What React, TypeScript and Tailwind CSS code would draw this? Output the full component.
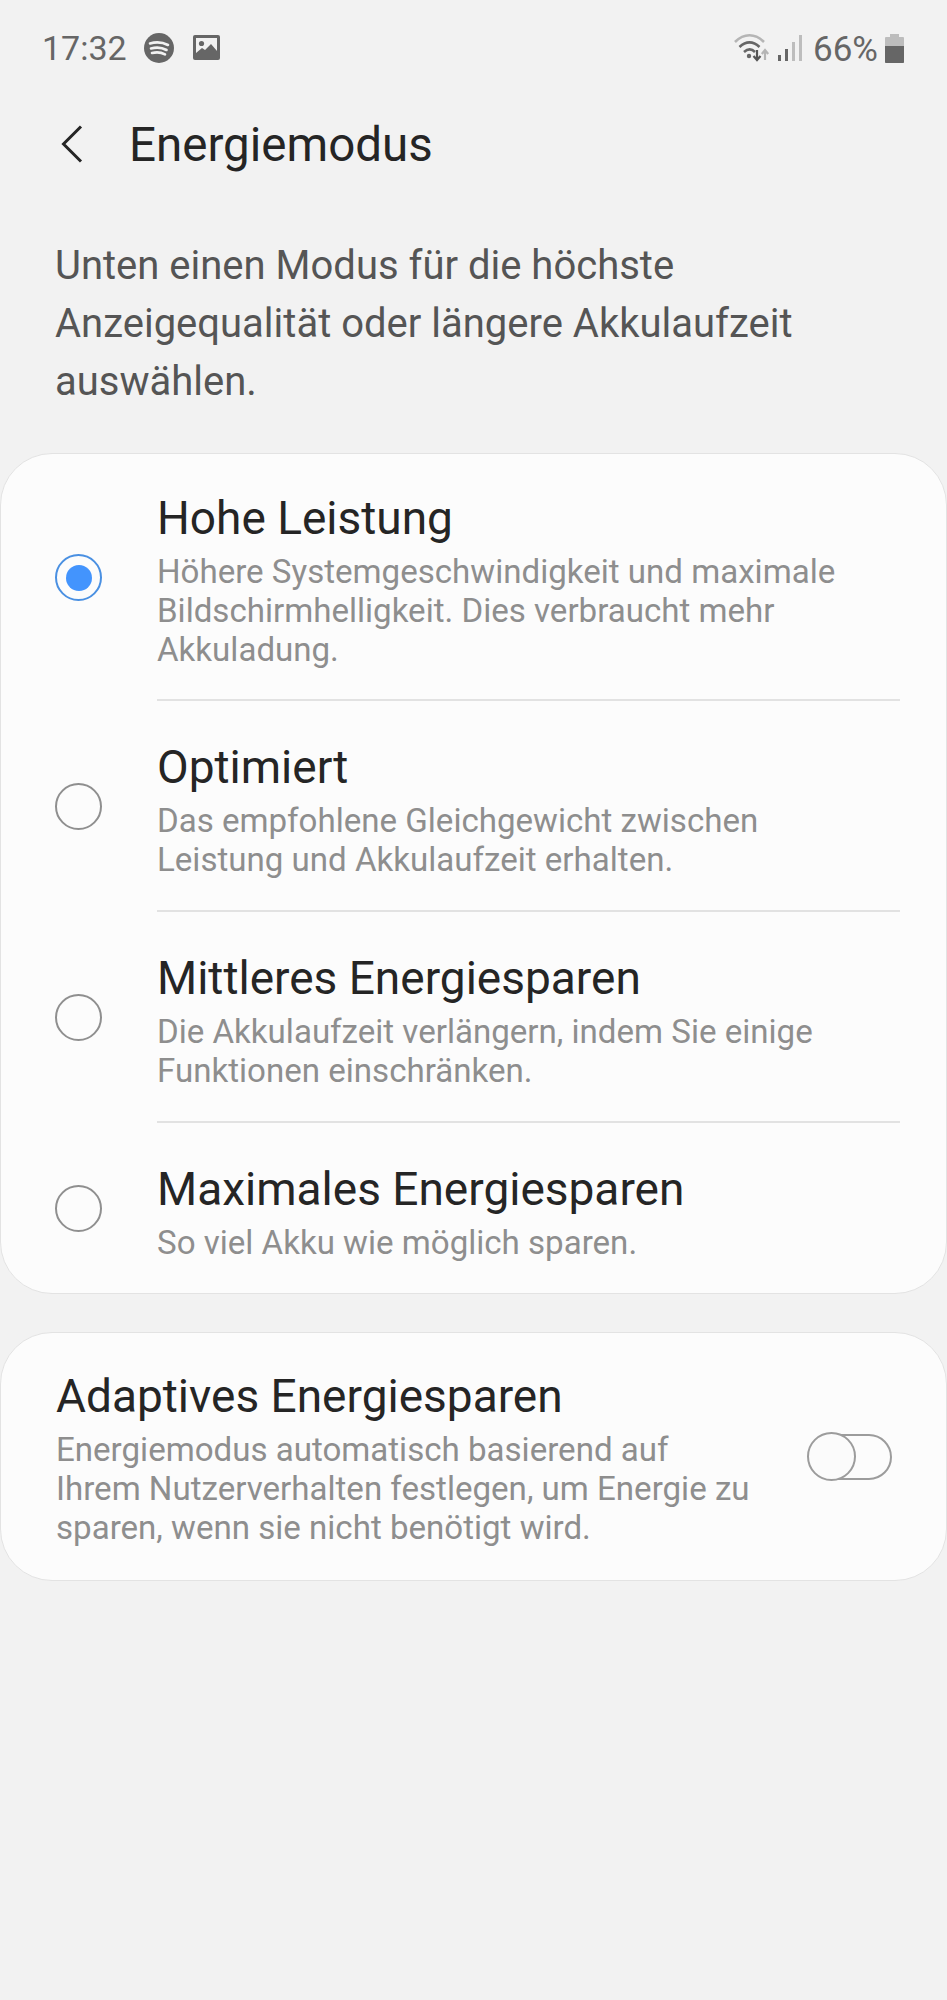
const rows = [
  {
    title: 'Hohe Leistung',
    sub: ['Höhere Systemgeschwindigkeit und maximale', 'Bildschirmhelligkeit. Dies verbraucht mehr', 'Akkuladung.'],
    on: true,
  },
  {
    title: 'Optimiert',
    sub: ['Das empfohlene Gleichgewicht zwischen', 'Leistung und Akkulaufzeit erhalten.'],
  },
  {
    title: 'Mittleres Energiesparen',
    sub: ['Die Akkulaufzeit verlängern, indem Sie einige', 'Funktionen einschränken.'],
  },
  {
    title: 'Maximales Energiesparen',
    sub: ['So viel Akku wie möglich sparen.'],
  },
]

const StatusBar = () => (
  <div className="flex h-[96px] items-center justify-between pl-[42px] pr-[43px] text-[34px] text-[#666666]">
    <div className="flex items-center">
      <span>17:32</span>
      <svg className="ml-[17px]" width="30" height="30" viewBox="0 0 30 30">
        <circle cx="15" cy="15" r="15" fill="#666666" />
        <path d="M6 10.5c6-1.8 12.500-1.300 18 1.500M7 15.500c5-1.400 11-1 15.500 1.500M8 20c4.500-1.100 9-.8 13 1.300" fill="none" stroke="#f2f2f2" strokeWidth="2.600" strokeLinecap="round" />
      </svg>
      <svg className="ml-[19px]" width="28" height="26" viewBox="0 0 28 26">
        <rect width="27" height="25" rx="2" fill="#666666" />
        <rect x="3" y="3" width="21" height="15" fill="#f2f2f2" />
        <circle cx="8.500" cy="8.500" r="2.600" fill="#666666" />
        <path d="M3 18l6-5 3 2 6-6 6 7v3H3z" fill="#666666" />
      </svg>
    </div>
    <div className="flex items-center">
      <svg width="38" height="30" viewBox="0 0 38 30">
        <path d="M2 9C11 0 22 0 31 9" fill="none" stroke="#b5b5b5" strokeWidth="2.600" />
        <path d="M6.500 14c6.500-6 13.500-6 20 0M11 19c4-3.500 7.500-3.500 11 0" fill="none" stroke="#666666" strokeWidth="2.600" />
        <circle cx="16" cy="23" r="2.200" fill="#666666" />
        <path d="M24 17v9M20.500 23l3.500 4 3.500-4" fill="none" stroke="#555555" strokeWidth="2.200" />
        <path d="M32 27v-9M28.800 21l3.200-4 3.200 4" fill="none" stroke="#b5b5b5" strokeWidth="2.200" />
      </svg>
      <svg className="ml-[6px]" width="26" height="28" viewBox="0 0 26 28">
        <rect x="1" y="21" width="3" height="6" fill="#666666" />
        <rect x="8" y="15" width="3" height="12" fill="#666666" />
        <rect x="15" y="8" width="3" height="19" fill="#bdbdbd" />
        <rect x="22" y="1" width="3" height="26" fill="#bdbdbd" />
      </svg>
      <span className="ml-[10px] pt-[4px] text-[35px]">66%</span>
      <svg className="ml-[7px]" width="19" height="29" viewBox="0 0 19 29">
        <path d="M5 0h9v3h4a1 1 0 0 1 1 1v24a1 1 0 0 1-1 1H1a1 1 0 0 1-1-1V4a1 1 0 0 1 1-1h4z" fill="#bdbdbd" />
        <path d="M0 12h19v16a1 1 0 0 1-1 1H1a1 1 0 0 1-1-1z" fill="#666666" />
      </svg>
    </div>
  </div>
)

const Radio = ({ on }: { on?: boolean }) => (
  <div
    className={`flex h-[47px] w-[47px] shrink-0 items-center justify-center rounded-full border-2 ${
      on ? 'border-[#4a90e2]' : 'border-[#8f8f8f]'
    }`}
  >
    {on && <div className="h-[26px] w-[26px] rounded-full bg-[#4394fd]" />}
  </div>
)

export default function App() {
  return (
    <div className="min-h-[2000px] bg-[#f2f2f2] font-['Roboto',sans-serif]">
      <StatusBar />

      <div className="flex h-[96px] items-center pl-[61px]">
        <svg width="22" height="38" viewBox="0 0 22 38">
          <path d="M20 1.500L2.500 19 20 36.500" fill="none" stroke="#252525" strokeWidth="3" />
        </svg>
        <h1 className="ml-[46px] pt-[4px] text-[47.500px] leading-none text-[#252525]">Energiemodus</h1>
      </div>

      <p className="mt-[45px] pl-[55px] text-[40px] leading-[58px] text-[#555555]">
        Unten einen Modus für die höchste
        <br />
        Anzeigequalität oder längere Akkulaufzeit
        <br />
        auswählen.
      </p>

      <div className="mt-[42px] rounded-[52px] border border-[#e3e3e3] bg-[#fcfcfc]">
        {rows.map((row, i) => (
          <div key={row.title} className="flex items-center pl-[54px]">
            <Radio on={row.on} />
            <div
              className={`ml-[55px] mr-[46px] flex-1 ${i === 0 ? 'pt-[37px] pb-[30px]' : 'pt-[39px] pb-[31px]'} ${
                i < rows.length - 1 ? 'border-b-2 border-[#e2e2e2]' : ''
              }`}
            >
              <div className="mb-[7px] text-[46px] leading-[54px] text-[#252525]">{row.title}</div>
              {row.sub.map((line) => (
                <div key={line} className="text-[33.100px] leading-[39px] text-[#8e8e8e]">
                  {line}
                </div>
              ))}
            </div>
          </div>
        ))}
      </div>

      <div className="mt-[38px] flex h-[249px] items-center justify-between rounded-[52px] border border-[#e3e3e3] bg-[#fcfcfc] pl-[55px] pr-[54px]">
        <div>
          <div className="mb-[5px] text-[46px] leading-[58px] text-[#252525]">Adaptives Energiesparen</div>
          <div className="text-[33.100px] leading-[39px] text-[#8e8e8e]">
            Energiemodus automatisch basierend auf
            <br />
            Ihrem Nutzerverhalten festlegen, um Energie zu
            <br />
            sparen, wenn sie nicht benötigt wird.
          </div>
        </div>
        <div className="relative h-[46px] w-[78px] rounded-full border-[2.500px] border-[#9c9c9c]">
          <div className="absolute left-[-9px] top-[-4px] h-[49px] w-[49px] rounded-full border-[2.500px] border-[#9c9c9c] bg-[#fbfbfb]" />
        </div>
      </div>
    </div>
  )
}
